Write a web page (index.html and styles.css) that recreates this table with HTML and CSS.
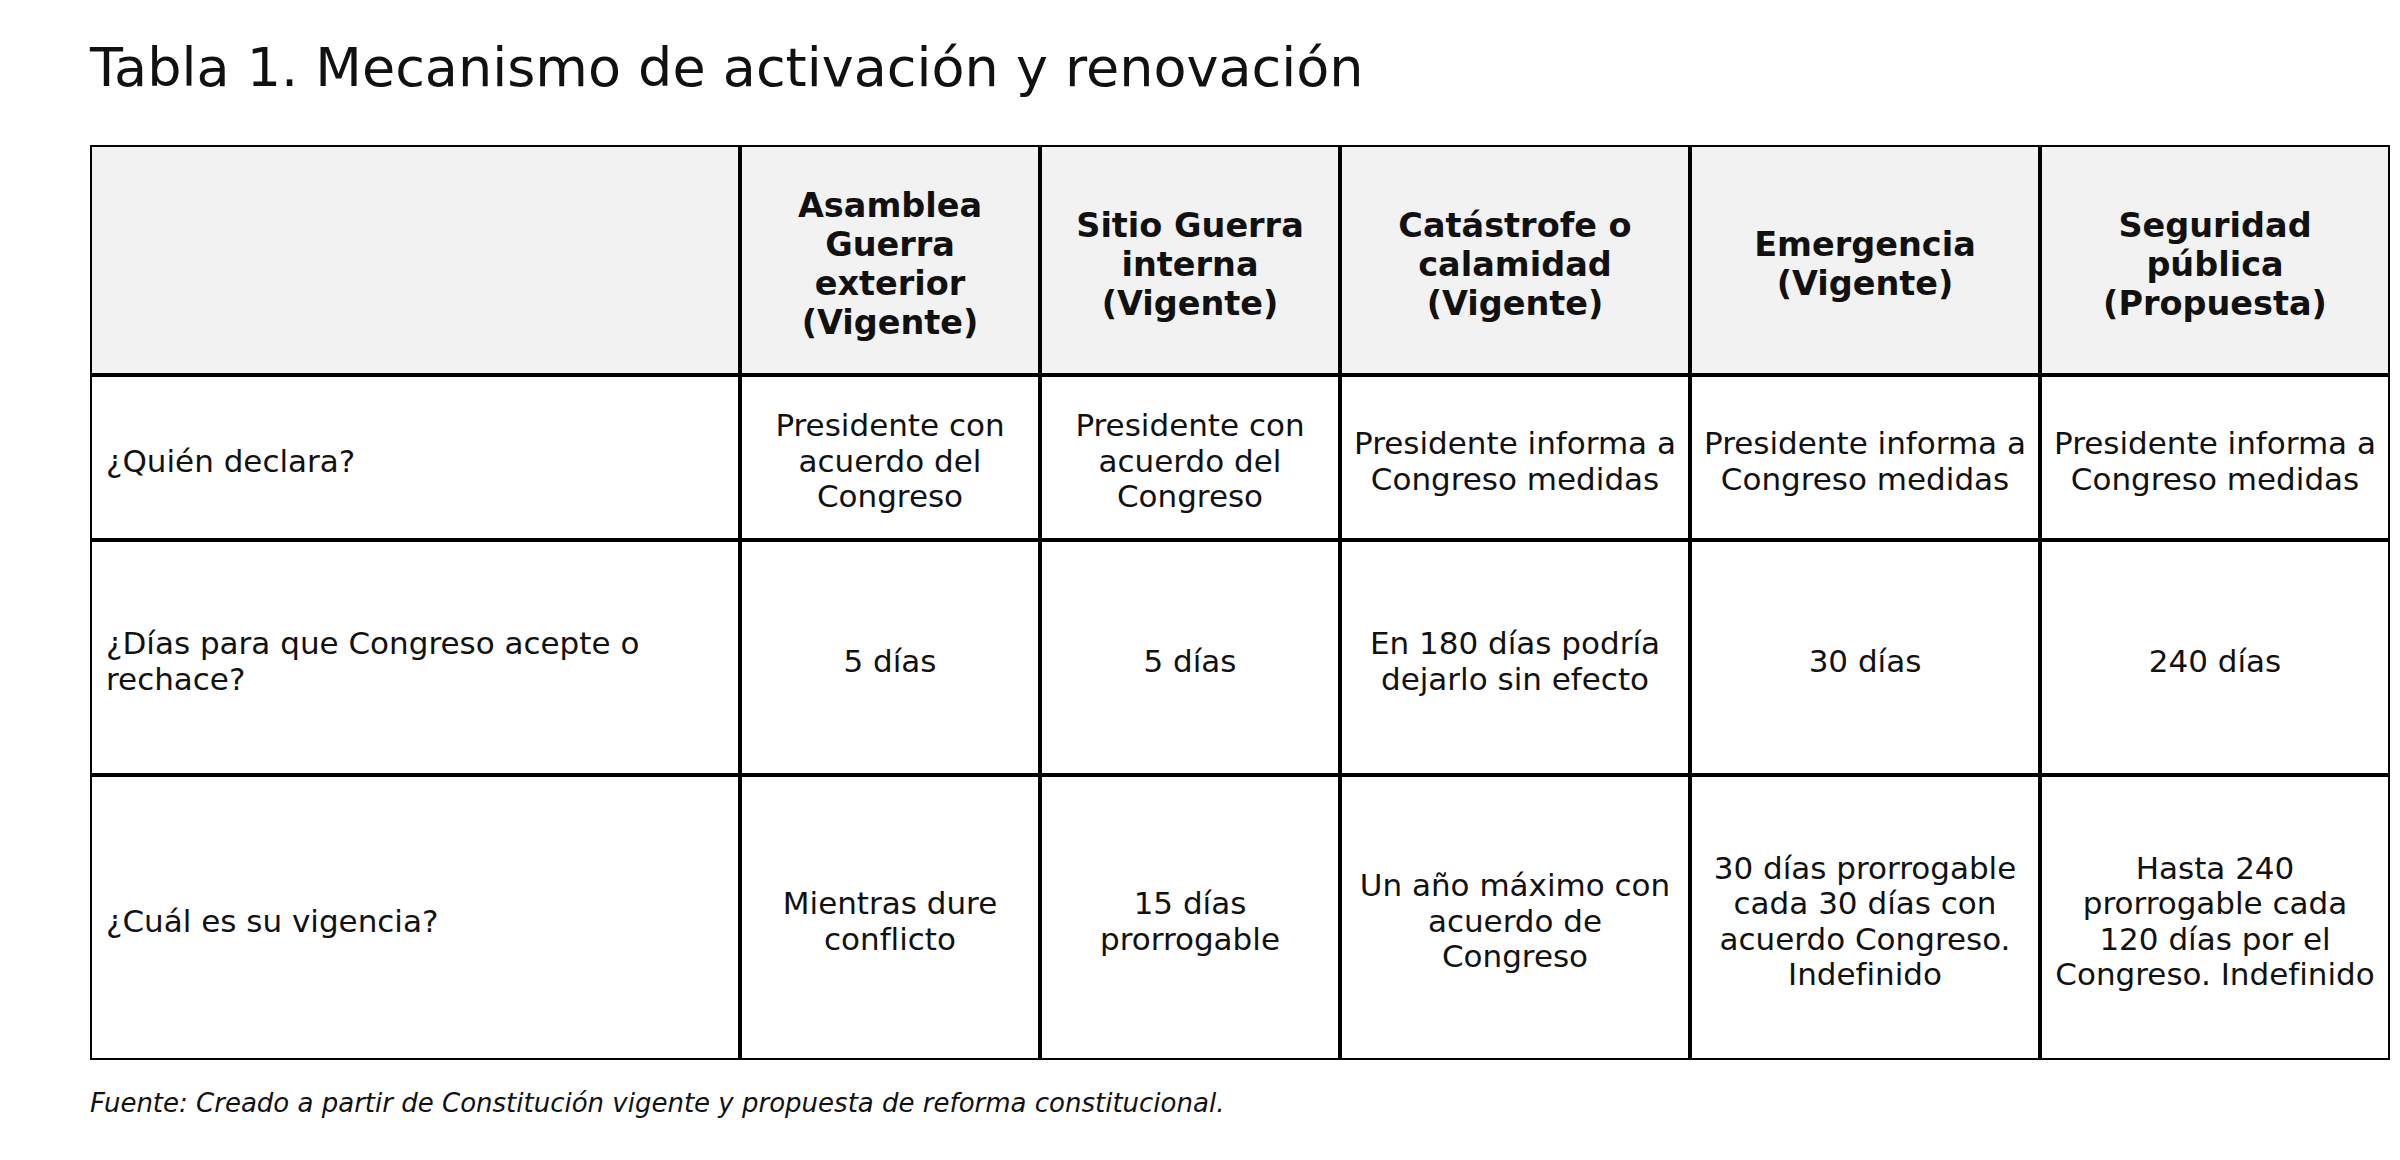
FILE: index.html
```html
<!DOCTYPE html>
<html lang="es">
<head>
<meta charset="utf-8">
<title>Tabla 1. Mecanismo de activación y renovación</title>
<link rel="stylesheet" href="styles.css">
</head>
<body>
<main class="page">
  <h1 class="title">Tabla 1. Mecanismo de activación y renovación</h1>
  <table class="grid">
    <colgroup>
      <col class="c-label">
      <col class="c-narrow">
      <col class="c-narrow">
      <col class="c-wide">
      <col class="c-wide">
      <col class="c-wide">
    </colgroup>
    <thead>
      <tr class="r-head">
        <th class="corner"></th>
        <th>Asamblea<br>Guerra<br>exterior<br>(Vigente)</th>
        <th>Sitio Guerra<br>interna<br>(Vigente)</th>
        <th>Catástrofe o<br>calamidad<br>(Vigente)</th>
        <th>Emergencia<br>(Vigente)</th>
        <th>Seguridad<br>pública<br>(Propuesta)</th>
      </tr>
    </thead>
    <tbody>
      <tr class="r-1">
        <td class="label">¿Quién declara?</td>
        <td>Presidente con<br>acuerdo del<br>Congreso</td>
        <td>Presidente con<br>acuerdo del<br>Congreso</td>
        <td>Presidente informa a<br>Congreso medidas</td>
        <td>Presidente informa a<br>Congreso medidas</td>
        <td>Presidente informa a<br>Congreso medidas</td>
      </tr>
      <tr class="r-2">
        <td class="label">¿Días para que Congreso acepte o<br>rechace?</td>
        <td>5 días</td>
        <td>5 días</td>
        <td>En 180 días podría<br>dejarlo sin efecto</td>
        <td>30 días</td>
        <td>240 días</td>
      </tr>
      <tr class="r-3">
        <td class="label">¿Cuál es su vigencia?</td>
        <td>Mientras dure<br>conflicto</td>
        <td>15 días<br>prorrogable</td>
        <td>Un año máximo con<br>acuerdo de<br>Congreso</td>
        <td>30 días prorrogable<br>cada 30 días con<br>acuerdo Congreso.<br>Indefinido</td>
        <td>Hasta 240<br>prorrogable cada<br>120 días por el<br>Congreso. Indefinido</td>
      </tr>
    </tbody>
  </table>
  <p class="source">Fuente: Creado a partir de Constitución vigente y propuesta de reforma constitucional.</p>
</main>
</body>
</html>
```

FILE: styles.css
```css
html, body {
  margin: 0;
  padding: 0;
  background: #ffffff;
}

body {
  font-family: "DejaVu Sans", "Liberation Sans", sans-serif;
  color: #111111;
}

.page {
  padding: 35px 0 0 90px;
}

.title {
  margin: 0 0 45px 0;
  font-size: 54px;
  font-weight: normal;
  line-height: 65px;
  white-space: nowrap;
}

.grid {
  table-layout: fixed;
  width: 2300px;
  border-collapse: separate;
  border-spacing: 0;
}

.c-label { width: 650px; }
.c-narrow { width: 300px; }
.c-wide { width: 350px; }

.grid th,
.grid td {
  border: 2px solid #000000;
  padding: 8px 12px 0 12px;
  text-align: center;
  vertical-align: middle;
  white-space: nowrap;
  box-sizing: border-box;
}

.grid th {
  background: #f2f2f2;
  font-weight: bold;
  font-size: 33.5px;
  line-height: 39px;
}

.grid td {
  font-size: 31px;
  line-height: 35.5px;
}

.grid td.label {
  text-align: left;
  padding-left: 14px;
}

.r-head { height: 230px; }
.r-1 { height: 165px; }
.r-2 { height: 235px; }
.r-3 { height: 285px; }

.source {
  margin: 28px 0 0 0;
  font-size: 26px;
  line-height: 30px;
  font-style: italic;
  white-space: nowrap;
}
```
